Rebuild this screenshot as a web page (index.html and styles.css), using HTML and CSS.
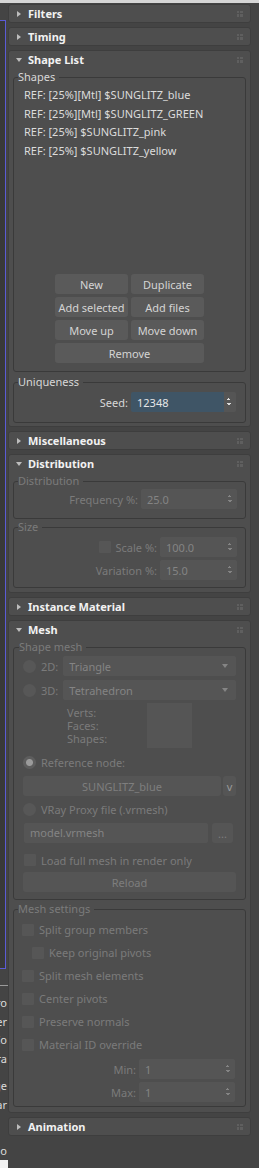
FILE: index.html
```html
<!DOCTYPE html>
<html lang="en">

<head>
    <meta charset="UTF-8">
    <meta name="viewport" content="width=device-width, initial-scale=1.0">
    <title>Scatter Shapes</title>
    <link rel="stylesheet" href="styles.css">
</head>

<body>
    <div class="topbar"></div>

    <div class="main">
        <div class="side">
            <div class="viewport"></div>
            <div class="side-rule"></div>
            <div class="side-text">
                <span>ro</span>
                <span>er</span>
                <span>Co</span>
                <span>ra</span>
                <span class="gap">ge</span>
                <span>ar</span>
                <span class="gap2">o</span>
            </div>
            <div class="side-box"></div>
        </div>

        <div class="panel">
            <section class="rollout closed">
                <div class="head"><span class="tri"></span><span class="title">Filters</span><span class="grip"></span></div>
            </section>

            <section class="rollout closed">
                <div class="head"><span class="tri"></span><span class="title">Timing</span><span class="grip"></span></div>
            </section>

            <section class="rollout open">
                <div class="head"><span class="tri"></span><span class="title">Shape List</span><span class="grip"></span></div>

                <fieldset class="group shapes">
                    <legend>Shapes</legend>
                    <ul class="list">
                        <li>REF: [25%][Mtl] $SUNGLITZ_blue</li>
                        <li>REF: [25%][Mtl] $SUNGLITZ_GREEN</li>
                        <li>REF: [25%] $SUNGLITZ_pink</li>
                        <li>REF: [25%] $SUNGLITZ_yellow</li>
                    </ul>
                    <div class="buttons">
                        <button class="btn">New</button>
                        <button class="btn">Duplicate</button>
                        <button class="btn">Add selected</button>
                        <button class="btn">Add files</button>
                        <button class="btn">Move up</button>
                        <button class="btn">Move down</button>
                        <button class="btn wide">Remove</button>
                    </div>
                </fieldset>

                <fieldset class="group unique">
                    <legend>Uniqueness</legend>
                    <div class="row">
                        <label>Seed:</label>
                        <div class="spinner active seed"><span>12348</span><i class="arrows"></i></div>
                    </div>
                </fieldset>
            </section>

            <section class="rollout closed">
                <div class="head"><span class="tri"></span><span class="title">Miscellaneous</span><span class="grip"></span></div>
            </section>

            <section class="rollout open dim">
                <div class="head"><span class="tri"></span><span class="title">Distribution</span><span class="grip"></span></div>

                <fieldset class="group dist">
                    <legend>Distribution</legend>
                    <div class="row">
                        <label>Frequency %:</label>
                        <div class="spinner w96"><span>25.0</span><i class="arrows"></i></div>
                    </div>
                </fieldset>

                <fieldset class="group size">
                    <legend>Size</legend>
                    <div class="row">
                        <span class="check"></span>
                        <label>Scale %:</label>
                        <div class="spinner w77"><span>100.0</span><i class="arrows"></i></div>
                    </div>
                    <div class="row">
                        <label>Variation %:</label>
                        <div class="spinner w77"><span>15.0</span><i class="arrows"></i></div>
                    </div>
                </fieldset>
            </section>

            <section class="rollout closed">
                <div class="head"><span class="tri"></span><span class="title">Instance Material</span><span class="grip"></span></div>
            </section>

            <section class="rollout open dim">
                <div class="head"><span class="tri"></span><span class="title">Mesh</span><span class="grip"></span></div>

                <fieldset class="group shape-mesh">
                    <legend>Shape mesh</legend>
                    <div class="pick">
                        <span class="radio"></span>
                        <label>2D:</label>
                        <div class="dropdown"><span>Triangle</span><i class="down"></i></div>
                    </div>
                    <div class="pick">
                        <span class="radio"></span>
                        <label>3D:</label>
                        <div class="dropdown"><span>Tetrahedron</span><i class="down"></i></div>
                    </div>
                    <div class="stats">
                        <div class="stat-names">
                            <div>Verts:</div>
                            <div>Faces:</div>
                            <div>Shapes:</div>
                        </div>
                        <div class="preview"></div>
                    </div>
                    <div class="opt">
                        <span class="radio on"></span>
                        <label>Reference node:</label>
                    </div>
                    <div class="node-row">
                        <button class="btn node">SUNGLITZ_blue</button>
                        <button class="btn small">v</button>
                    </div>
                    <div class="opt">
                        <span class="radio"></span>
                        <label>VRay Proxy file (.vrmesh)</label>
                    </div>
                    <div class="file-row">
                        <div class="field">model.vrmesh</div>
                        <button class="btn dots">...</button>
                    </div>
                    <div class="opt load">
                        <span class="check"></span>
                        <label>Load full mesh in render only</label>
                    </div>
                    <button class="btn reload">Reload</button>
                </fieldset>

                <fieldset class="group mesh-settings">
                    <legend>Mesh settings</legend>
                    <div class="opt"><span class="check"></span><label>Split group members</label></div>
                    <div class="opt indent"><span class="check"></span><label>Keep original pivots</label></div>
                    <div class="opt"><span class="check"></span><label>Split mesh elements</label></div>
                    <div class="opt"><span class="check"></span><label>Center pivots</label></div>
                    <div class="opt"><span class="check"></span><label>Preserve normals</label></div>
                    <div class="opt"><span class="check"></span><label>Material ID override</label></div>
                    <div class="row">
                        <label>Min:</label>
                        <div class="spinner w96"><span>1</span><i class="arrows"></i></div>
                    </div>
                    <div class="row">
                        <label>Max:</label>
                        <div class="spinner w96"><span>1</span><i class="arrows"></i></div>
                    </div>
                </fieldset>
            </section>

            <section class="rollout closed">
                <div class="head"><span class="tri"></span><span class="title">Animation</span><span class="grip"></span></div>
            </section>
        </div>
    </div>
</body>

</html>
```

FILE: styles.css
```css
body {
    margin: 0;
    background-color: #444444;
    font-family: "Noto Sans", "Open Sans", sans-serif;
    font-size: 11px;
    color: #d8d8d8;
    width: 259px;
    height: 1168px;
    overflow: hidden;
}

.topbar {
    height: 3px;
    background-color: #d6d6d6;
}

.main {
    display: flex;
}

/* clipped strip of the viewport on the left */
.side {
    width: 8px;
    flex-shrink: 0;
    overflow: hidden;
    display: flex;
    flex-direction: column;
    align-items: flex-end;
}

.viewport {
    width: 8px;
    height: 947px;
    margin-top: 17px;
    margin-right: 2px;
    background-color: #393939;
    border-top: 1px solid #5b5bd6;
    border-right: 1px solid #5b5bd6;
    border-bottom: 1px solid #5b5bd6;
}

.side-rule {
    width: 8px;
    height: 1px;
    margin-top: 16px;
    background-color: #9a9a9a;
}

.side-text {
    display: flex;
    flex-direction: column;
    align-items: flex-end;
    margin-top: 8px;
    line-height: 18.6px;
    color: #dcdcdc;
}

.side-text span {
    margin-right: 1px;
}

.side-text .gap {
    margin-top: 9px;
}

.side-text .gap2 {
    margin-top: 27px;
}

.side-box {
    width: 8px;
    height: 12px;
    align-self: flex-start;
    background-color: #f2f2f2;
}

.panel {
    width: 243px;
    padding: 1px 0 0 0;
    display: flex;
    flex-direction: column;
    gap: 4px;
}

.rollout {
    background-color: #4e4e4e;
    border: 1px solid #3e3e3e;
    border-radius: 3px;
}

.head {
    height: 17px;
    display: flex;
    align-items: center;
    padding: 0 7px 0 6px;
}

.title {
    flex: 1;
    font-weight: bold;
    color: #f2f2f2;
    font-size: 11px;
}

.tri {
    width: 12px;
    height: 8px;
    margin-right: 1px;
    display: flex;
    align-items: center;
}

.closed .tri::before {
    content: "";
    margin-left: 2px;
    border-left: 4px solid #bdbdbd;
    border-top: 3px solid transparent;
    border-bottom: 3px solid transparent;
}

.open .tri::before {
    content: "";
    margin-left: 1px;
    border-top: 4px solid #bdbdbd;
    border-left: 3px solid transparent;
    border-right: 3px solid transparent;
}

.grip {
    width: 6px;
    height: 6px;
    background:
        linear-gradient(#4e4e4e, #4e4e4e) 2px 0 / 1px 6px no-repeat,
        linear-gradient(#4e4e4e, #4e4e4e) 0 2px / 6px 1px no-repeat,
        #5f5f5f;
}

.group {
    margin: 0 4px;
    padding: 0 8px 0 8px;
    border: 1px solid #3a3a3a;
    border-radius: 3px;
    min-width: 0;
}

.group legend {
    padding: 0 4px 0 0;
    margin-left: -4px;
    line-height: 14px;
    color: #d8d8d8;
}

.dim .group legend,
.dim label,
.dim .stat-names {
    color: #7b7b7b;
}

.shapes {
    margin-top: 2px;
    padding-bottom: 8px;
}

.list {
    list-style: none;
    margin: 0;
    padding: 2px 0 0 2px;
    height: 185px;
    line-height: 18.6px;
    color: #dcdcdc;
}

.buttons {
    display: grid;
    grid-template-columns: 73px 73px;
    gap: 3px;
    justify-content: center;
    margin-top: 3px;
}

.btn {
    height: 20px;
    padding: 0;
    border: none;
    border-radius: 3px;
    background-color: #5a5a5a;
    color: #d4d4d4;
    font-family: inherit;
    font-size: 11px;
}

.buttons .wide {
    grid-column: span 2;
}

.unique {
    margin-top: 3px;
    margin-bottom: 3px;
    padding-bottom: 10px;
}

.row {
    display: flex;
    justify-content: flex-end;
    align-items: center;
    gap: 3px;
    height: 20px;
}

.unique .row {
    margin-top: 3px;
    padding-right: 1px;
}

.spinner {
    height: 20px;
    display: flex;
    align-items: center;
    background-color: #555555;
    border-radius: 2px;
    color: #848484;
}

.spinner span {
    flex: 1;
    padding-left: 6px;
}

.spinner.seed {
    width: 105px;
}

.spinner.active {
    background: linear-gradient(to right, #3f5566 calc(100% - 12px), #555555 calc(100% - 12px));
    color: #e6e6e6;
}

.w96 {
    width: 96px;
}

.w77 {
    width: 77px;
}

.arrows {
    width: 12px;
    height: 20px;
    background:
        linear-gradient(to bottom right, transparent 50%, currentColor 50%) 3px 6px / 2px 2px no-repeat,
        linear-gradient(to bottom left, transparent 50%, currentColor 50%) 5px 6px / 2px 2px no-repeat,
        linear-gradient(to top right, transparent 50%, currentColor 50%) 3px 11px / 2px 2px no-repeat,
        linear-gradient(to top left, transparent 50%, currentColor 50%) 5px 11px / 2px 2px no-repeat;
}

.spinner.active .arrows {
    color: #dcdcdc;
}

.dist {
    margin-top: 2px;
    padding-bottom: 9px;
}

.dist .row {
    margin-top: 1px;
}

.size {
    margin-top: 1px;
    margin-bottom: 4px;
    padding-bottom: 7px;
}

.size .row {
    margin-top: 3px;
}

.size .check {
    margin-right: 2px;
}

.check {
    width: 12px;
    height: 12px;
    flex-shrink: 0;
    background-color: #565656;
    border-radius: 1px;
}

.radio {
    width: 13px;
    height: 13px;
    flex-shrink: 0;
    border-radius: 50%;
    background-color: #575757;
}

.radio.on {
    background: radial-gradient(circle, #9b9b9b 0 3px, #5d5d5d 4px);
}

.shape-mesh {
    margin-top: 2px;
    padding: 0 9px 7px 9px;
}

.pick {
    display: flex;
    align-items: center;
    height: 20px;
    margin-top: 2px;
}

.pick label {
    margin: 0 5px 0 5px;
}

.pick + .pick {
    margin-top: 4px;
}

.dropdown {
    flex: 1;
    height: 20px;
    display: flex;
    align-items: center;
    background-color: #555555;
    border-radius: 2px;
    color: #848484;
    padding: 0 8px 0 6px;
}

.dropdown span {
    flex: 1;
}

.down {
    border-top: 4px solid #858585;
    border-left: 3.5px solid transparent;
    border-right: 3.5px solid transparent;
}

.stats {
    display: flex;
    margin-top: 2px;
    height: 47px;
}

.stat-names {
    width: 80px;
    margin-left: 44px;
    padding-top: 4px;
    line-height: 13px;
}

.preview {
    width: 45px;
    height: 45px;
    margin-top: 1px;
    background-color: #555555;
}

.opt {
    display: flex;
    align-items: center;
    gap: 5px;
    height: 16px;
}

.shape-mesh .opt {
    margin-top: 5px;
}

.node-row {
    display: flex;
    gap: 2px;
    margin-top: 6px;
}

.dim .btn {
    background-color: #555555;
    color: #7e7e7e;
}

.node {
    flex: 1;
}

.small {
    width: 13px;
    color: #9a9a9a !important;
}

.file-row {
    display: flex;
    gap: 4px;
    margin-top: 6px;
    padding: 0 3px 0 1px;
}

.field {
    flex: 1;
    height: 20px;
    line-height: 20px;
    padding-left: 6px;
    background-color: #555555;
    color: #848484;
    border-radius: 2px;
}

.dots {
    width: 21px;
}

.shape-mesh .load {
    margin-top: 9px;
    padding-left: 1px;
}

.reload {
    display: block;
    width: 100%;
    margin-top: 4px;
}

.mesh-settings {
    margin-top: 2px;
    margin-bottom: 5px;
    padding: 0 10px 4px 8px;
}

.mesh-settings .opt {
    height: 23px;
}

.mesh-settings .opt:first-of-type {
    margin-top: 2px;
}

.mesh-settings .indent {
    padding-left: 10px;
}

.mesh-settings .row {
    margin-top: 3px;
    padding-right: 0;
}
```
